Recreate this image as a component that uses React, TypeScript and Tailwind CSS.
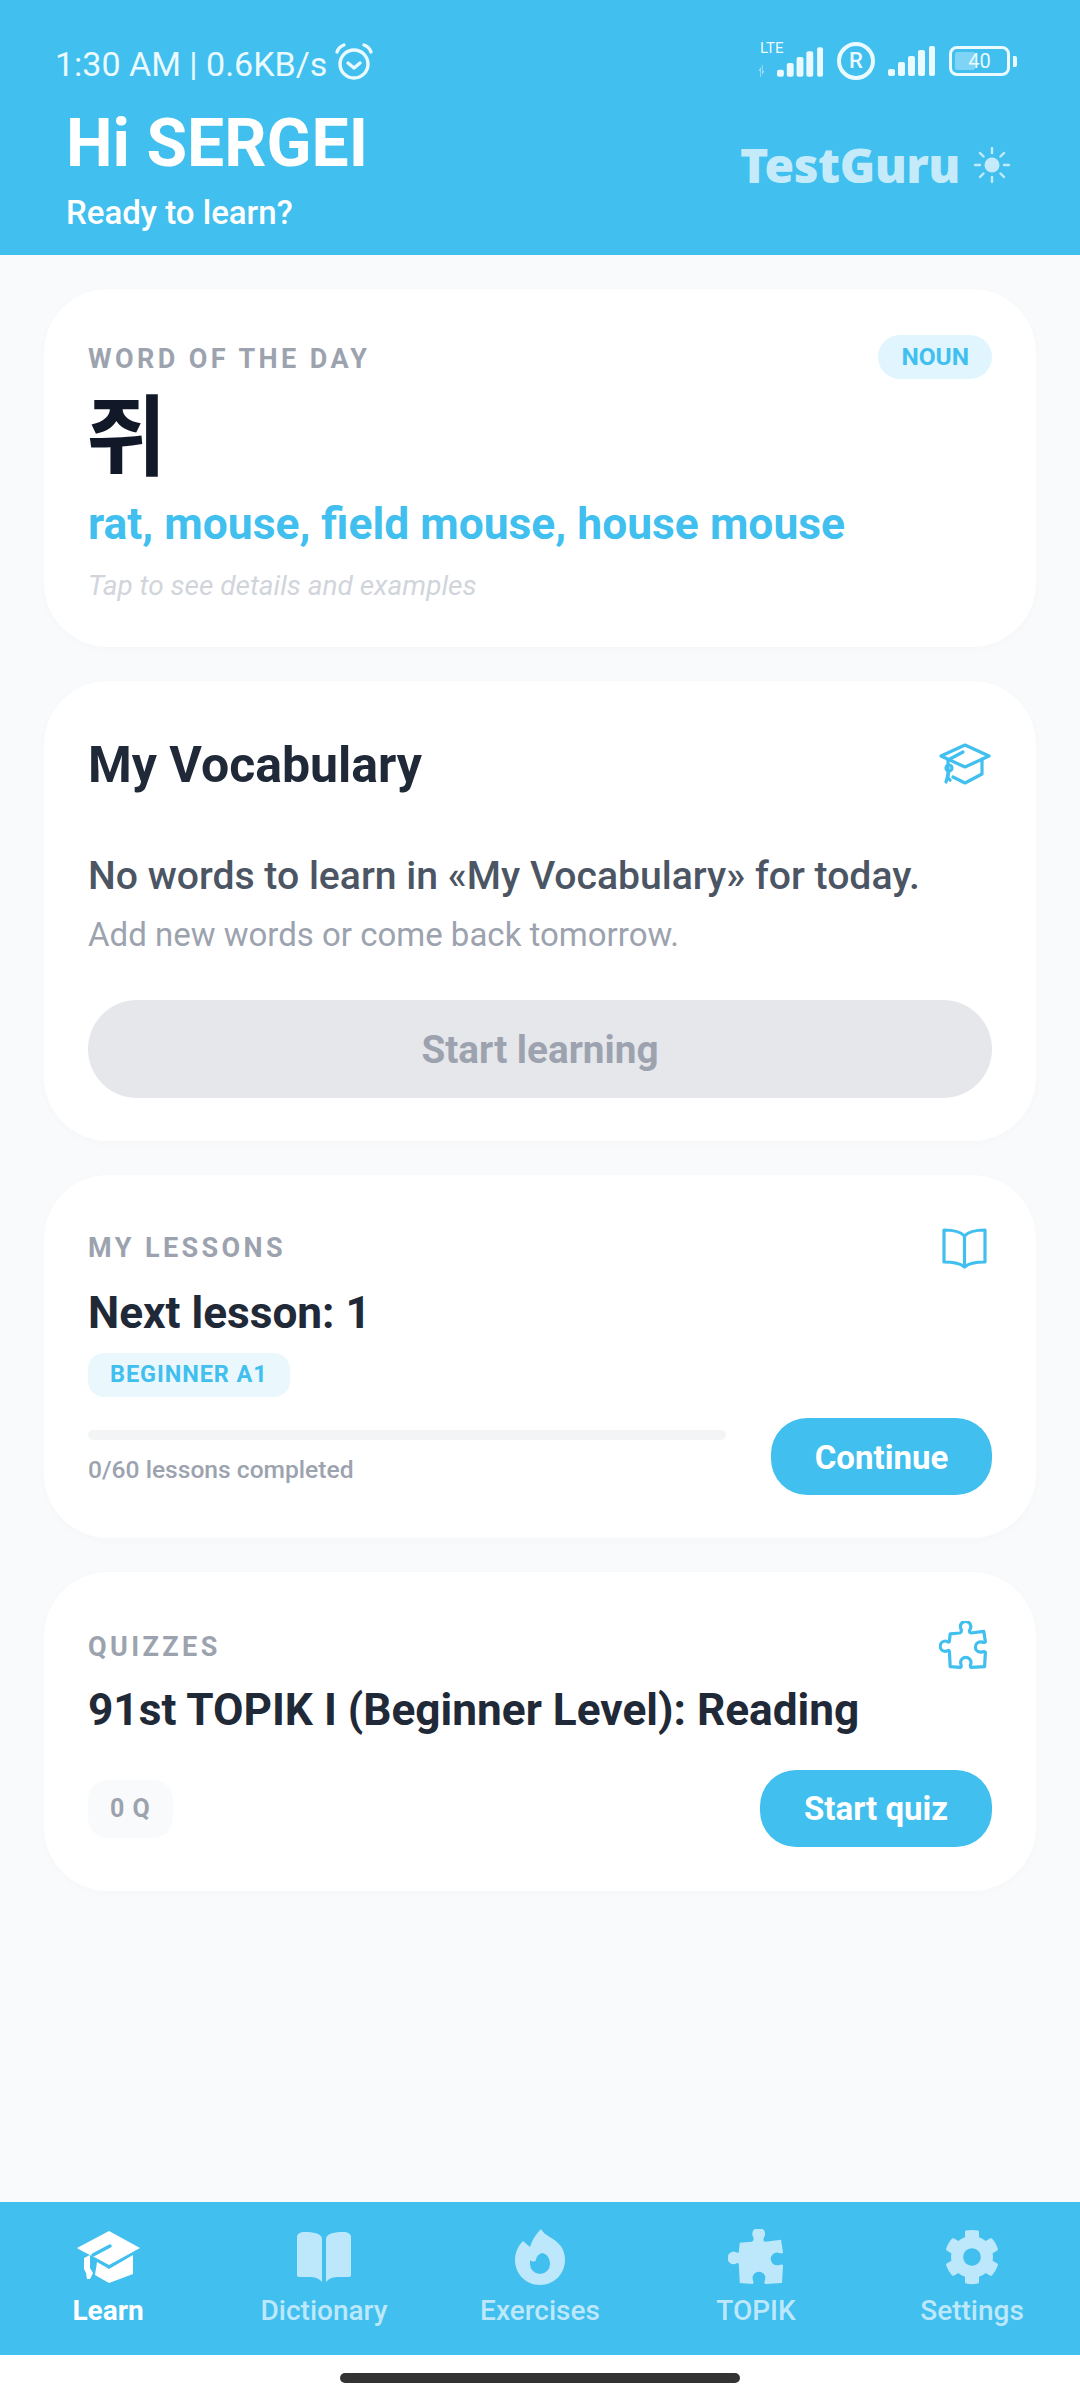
import { FaCog } from "react-icons/fa";

const ROBOTO = "[font-family:Roboto,'Noto_Sans_CJK_KR',sans-serif]";
const PUZZLE_PATH =
  "M12 14L24 13C27 12 26 10 25.5 8A6.5 6.5 0 1 1 37 8C36 10 35 12 38 13L54 11L56 24C55 26 52 24 50 24A6.5 6.5 0 0 0 50 37C52 37 55 35 56 37L55 55L38 56C36 55 38 52 38 50A6.5 6.5 0 0 0 25 50C25 52 27 55 25 56L12 55L11 36C10 33 8 36 6 36A6.5 6.5 0 0 1 6 23C8 23 11 26 11 23Z";

function SignalBars({ className }: { className?: string }) {
  return (
    <svg viewBox="0 0 48 30" className={className} fill="#eafaff">
      <rect x="0" y="23" width="7" height="7" rx="2" />
      <rect x="10" y="16" width="7" height="14" rx="2" />
      <rect x="20" y="10" width="7" height="20" rx="2" />
      <rect x="30" y="4" width="7" height="26" rx="2" />
      <rect x="41" y="0" width="6" height="30" rx="2" />
    </svg>
  );
}

function StatusBar() {
  return (
    <div className="flex h-[84px] items-end justify-between pl-[55px] pr-[63px]">
      <div className="flex items-center gap-[7px] text-[#eafaff]">
        <span className="text-[34px] leading-[40px]">1:30 AM | 0.6KB/s</span>
        <svg viewBox="0 0 40 40" className="mt-[-4px] h-[40px] w-[40px]" fill="none" stroke="#eafaff" strokeWidth="3.4" strokeLinecap="round" strokeLinejoin="round">
          <circle cx="20" cy="22" r="14" />
          <path d="M14 21l6 5 6-5" />
          <path d="M3 10c1-3 4-6 7-7M37 10c-1-3-4-6-7-7" />
        </svg>
      </div>
      <div className="mb-[4px] flex items-center gap-[13px]">
        <div className="relative h-[32px] w-[67px]">
          <span className="absolute left-[3px] top-[-5px] text-[15px] leading-[16px] text-[#eafaff]">LTE</span>
          <svg viewBox="0 0 14 14" className="absolute bottom-[0px] left-0 h-[12px] w-[15px]" fill="#9fdcf5">
            <path d="M0 7l3-5v12H2V7zM7 7L4 12V0h1v7z" />
          </svg>
          <SignalBars className="absolute bottom-0 right-0 h-[30px] w-[47px]" />
        </div>
        <div className="flex h-[38px] w-[38px] items-center justify-center rounded-full border-[4px] border-[#eafaff] text-[22px] font-medium leading-none text-[#eafaff]">
          R
        </div>
        <SignalBars className="h-[30px] w-[48px]" />
        <div className="flex items-center gap-[3px]">
          <div className="relative flex h-[30px] w-[61px] items-center justify-center rounded-[8px] border-[3px] border-[#eafaff] text-[20px] leading-none text-[#eafaff]">
            <div className="absolute bottom-[3px] left-[3px] top-[3px] w-[20px] rounded-[2px] bg-[#7fd3f5]" />
            <span className="relative">40</span>
          </div>
          <div className="h-[11px] w-[4px] rounded-r-[2px] bg-[#eafaff]" />
        </div>
      </div>
    </div>
  );
}

function Header() {
  return (
    <header className="h-[255px] bg-[#41bfee]">
      <StatusBar />
      <div className="flex items-start justify-between pl-[66px] pr-[70px] pt-[22px]">
        <div>
          <div className="text-[66px] font-bold leading-[76px] text-white">Hi SERGEI</div>
          <div className="mt-[13px] text-[33px] font-medium leading-[36px] text-white">Ready to learn?</div>
        </div>
        <div className="mt-[31px] flex items-center gap-[14px]">
          <span className="[font-family:'Noto_Sans',sans-serif] text-[48px] font-black leading-[56px] tracking-[-0.5px] text-[#c5ebfb]">TestGuru</span>
          <svg viewBox="0 0 36 36" className="h-[36px] w-[36px]" fill="#c5ebfb" stroke="#c5ebfb" strokeWidth="2.4" strokeLinecap="round">
            <circle cx="18" cy="18" r="7.5" stroke="none" />
            <path d="M18 1v5M18 30v5M1 18h5M30 18h5M6 6l3.5 3.5M26.5 26.5L30 30M6 30l3.5-3.5M26.5 9.5L30 6" />
          </svg>
        </div>
      </div>
    </header>
  );
}

function Card({ className, children }: { className?: string; children: React.ReactNode }) {
  return <section className={`rounded-[64px] bg-white px-[44px] shadow-[0_2px_10px_rgba(0,0,0,0.02)] ${className ?? ""}`}>{children}</section>;
}

function Label({ children }: { children: React.ReactNode }) {
  return <div className="text-[27px] font-bold leading-[32px] tracking-[3.4px] text-[#9ca3af]">{children}</div>;
}

function CapOutline() {
  return (
    <svg viewBox="0 0 52 44" className="mr-[1px] mt-[-2px] h-[44px] w-[52px]" fill="none" stroke="#41bfee" strokeWidth="3.2" strokeLinecap="round" strokeLinejoin="round">
      <path d="M26 3L50 14 26 25 2 14z" />
      <path d="M9 18v17c0 1 1 2 2 3M43 17v15L26 41 14 35" />
      <path d="M24 10L9 18" />
      <circle cx="10" cy="26" r="3" />
      <path d="M10 29l-3 11" />
    </svg>
  );
}

function BookOutline() {
  return (
    <svg viewBox="0 0 45 41" className="mr-[5px] h-[41px] w-[45px] shrink-0" fill="none" stroke="#41bfee" strokeWidth="3.2" strokeLinecap="round" strokeLinejoin="round">
      <path d="M22.5 8C18 3 10 2 2 2V34C10 34 18 35 22.5 39C27 35 35 34 43 34V2C35 2 27 3 22.5 8ZM22.5 8V39" />
    </svg>
  );
}

function PuzzleOutline() {
  return (
    <svg viewBox="-2 -2 60 60" className="mr-[5px] mt-[-5px] h-[48px] w-[48px] shrink-0" fill="none" stroke="#41bfee" strokeWidth="4" strokeLinejoin="round">
      <path d={PUZZLE_PATH} />
    </svg>
  );
}

function WordCard() {
  return (
    <Card className="h-[358px] pt-[46px]">
      <div className="flex items-start justify-between">
        <div className="pt-[8px]"><Label>WORD OF THE DAY</Label></div>
        <div className="flex h-[44px] items-center rounded-full bg-[#e0f5fd] px-[23px] text-[24.5px] font-bold text-[#41bfee]">NOUN</div>
      </div>
      <div className="ml-[-2px] mt-[9px] text-[88px] font-bold leading-[100px] text-[#111827]">쥐</div>
      <div className="mt-[8px] text-[44.4px] font-bold leading-[56px] text-[#41bfee]">rat, mouse, field mouse, house mouse</div>
      <div className="mt-[18px] text-[28px] italic leading-[32px] text-[#d1d5db]">Tap to see details and examples</div>
    </Card>
  );
}

function VocabularyCard() {
  return (
    <Card className="h-[460px] pt-[55px]">
      <div className="flex h-[58px] items-center justify-between">
        <h2 className="text-[50px] font-bold leading-[58px] text-[#1f2937]">My Vocabulary</h2>
        <CapOutline />
      </div>
      <p className="mt-[59px] text-[39.15px] font-medium leading-[46px] text-[#4b5563]">No words to learn in «My Vocabulary» for today.</p>
      <p className="mt-[17px] text-[33px] leading-[38px] text-[#9ca3af]">Add new words or come back tomorrow.</p>
      <div className="mt-[46px] flex h-[98px] items-center justify-center rounded-full bg-[#e5e7eb] pt-[3px] text-[38.7px] font-bold text-[#9ca3af]">Start learning</div>
    </Card>
  );
}

function LessonsCard() {
  return (
    <Card className="h-[363px] pt-[57px]">
      <div className="flex h-[32px] items-center justify-between">
        <Label>MY LESSONS</Label>
        <BookOutline />
      </div>
      <h2 className="mt-[23px] text-[44.2px] font-bold leading-[52px] text-[#1f2937]">Next lesson: 1</h2>
      <div className="mt-[14px] inline-flex h-[44px] items-center rounded-[16px] bg-[#eaf7fd] px-[22px] text-[23.5px] font-bold tracking-[0.9px] text-[#41bfee]">BEGINNER A1</div>
      <div className="mt-[33px] flex items-start justify-between">
        <div className="w-[638px]">
          <div className="h-[10px] rounded-full bg-[#f3f4f6]" />
          <div className="mt-[15px] text-[24.6px] font-medium leading-[30px] text-[#9ca3af]">0/60 lessons completed</div>
        </div>
        <div className="mt-[-12px] flex h-[77px] w-[221px] items-center justify-center rounded-[36px] bg-[#41bfee] pt-[2px] text-[33px] font-bold text-white">Continue</div>
      </div>
    </Card>
  );
}

function QuizzesCard() {
  return (
    <Card className="h-[319px] pt-[59px]">
      <div className="flex h-[32px] items-center justify-between">
        <Label>QUIZZES</Label>
        <PuzzleOutline />
      </div>
      <h2 className="mt-[21px] text-[44.2px] font-bold leading-[52px] text-[#1f2937]">91st TOPIK I (Beginner Level): Reading</h2>
      <div className="mt-[34px] flex items-center justify-between">
        <div className="flex h-[58px] items-center rounded-[20px] bg-[#f9fafb] px-[22px] text-[25px] font-bold tracking-[1px] text-[#9ca3af]">0 Q</div>
        <div className="flex h-[77px] w-[232px] items-center justify-center rounded-[36px] bg-[#41bfee] text-[33px] font-bold text-white">Start quiz</div>
      </div>
    </Card>
  );
}

function NavLearn() {
  return (
    <svg viewBox="0 0 63 52" className="h-[52px] w-[63px]" fill="#ffffff">
      <path d="M32 0L63 17 32 34 21 28 5 20 0 17z" />
      <path d="M20 31L32 38 56 24V43L32 52 18 44z" />
      <path d="M7 27L13 24V37L16 42 13 48H10L9 42 7 38z" />
      <path d="M33 15L16 24" fill="none" stroke="#41bfee" strokeWidth="3.5" strokeLinecap="round" />
    </svg>
  );
}

function NavBook() {
  return (
    <svg viewBox="0 0 56 50" className="h-[50px] w-[56px]" fill="#bde8fb">
      <path d="M1 5C1 2 4 0 9 0 16 0 26 1 26 7V50C23 46 18 45 13 45H3C2 45 1 44 1 43z" />
      <path d="M55 5C55 2 52 0 47 0 40 0 30 1 30 7V50C33 46 38 45 43 45H53C54 45 55 44 55 43z" />
    </svg>
  );
}

function NavFlame() {
  return (
    <svg viewBox="0 0 50 56" className="h-[56px] w-[50px]" fill="#bde8fb">
      <path fillRule="evenodd" d="M26 0C28 4 33 7 38 10 46 15 50 22 50 31 50 45 39 56 25 56 11 56 0 45 0 31 0 24 3 17 8 12L15 18C17 11 21 5 26 0ZM15 31C17 33 20 33 21 31 21 28 24 25 27 24 32 25 35 29 35 35A10 10 0 0 1 15 35Z" />
    </svg>
  );
}

function NavPuzzle() {
  return (
    <svg viewBox="0 0 57 57" className="h-[56px] w-[56px]" fill="#bde8fb">
      <path d={PUZZLE_PATH} />
    </svg>
  );
}

function NavItem({ label, active, children }: { label: string; active?: boolean; children: React.ReactNode }) {
  return (
    <div className={`flex flex-1 flex-col items-center ${active ? "text-white" : "text-[#bde8fb]"}`}>
      <div className="flex h-[60px] items-center justify-center">{children}</div>
      <div className={`mt-[8px] text-[28px] leading-[32px] ${active ? "font-bold" : "font-medium"}`}>{label}</div>
    </div>
  );
}

function BottomNav() {
  return (
    <nav className="flex h-[153px] bg-[#41bfee] pt-[25px]">
      <NavItem label="Learn" active><NavLearn /></NavItem>
      <NavItem label="Dictionary"><NavBook /></NavItem>
      <NavItem label="Exercises"><NavFlame /></NavItem>
      <NavItem label="TOPIK"><NavPuzzle /></NavItem>
      <NavItem label="Settings"><FaCog size={56} /></NavItem>
    </nav>
  );
}

export default function App() {
  return (
    <div className={`flex h-[2400px] w-[1080px] flex-col overflow-hidden bg-[#f9fafb] ${ROBOTO}`}>
      <Header />
      <main className="flex flex-1 flex-col gap-[34px] px-[44px] pt-[34px]">
        <WordCard />
        <VocabularyCard />
        <LessonsCard />
        <QuizzesCard />
      </main>
      <BottomNav />
      <div className="flex h-[45px] items-center justify-center bg-white">
        <div className="h-[10px] w-[400px] rounded-full bg-[#333333]" />
      </div>
    </div>
  );
}
